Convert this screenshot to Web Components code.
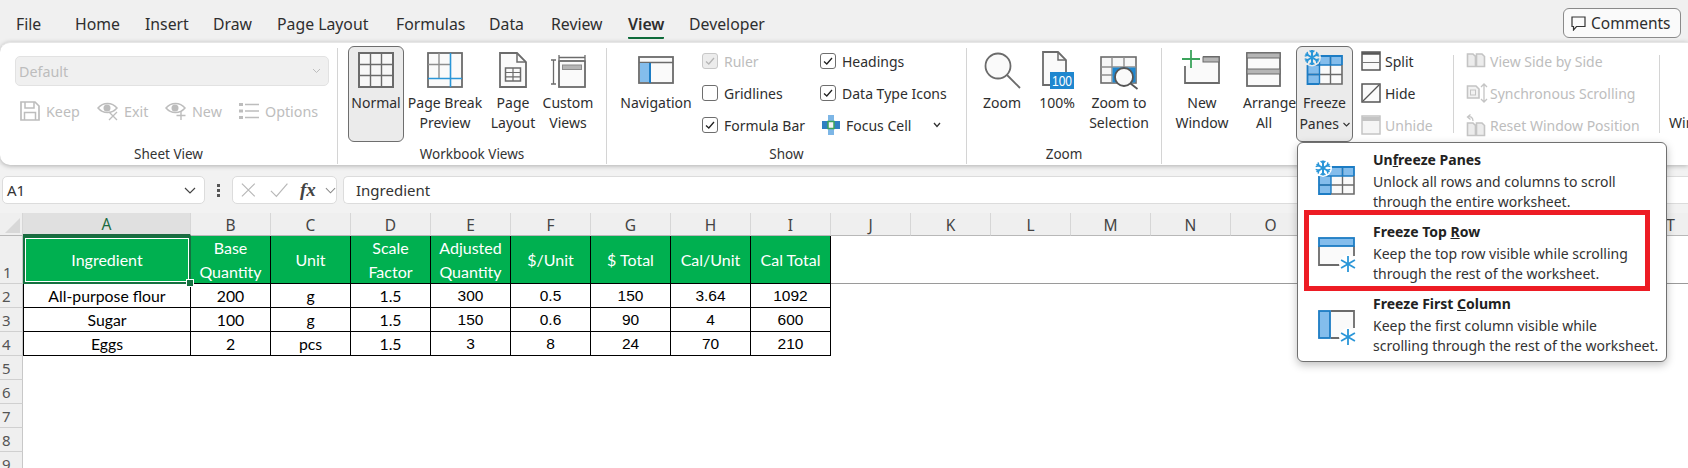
<!DOCTYPE html>
<html>
<head>
<meta charset="utf-8">
<style>
  html, body { margin: 0; height: 468px; overflow: hidden; background: #f0f0f0; font-family: "Noto Sans", "Open Sans", sans-serif; }
</style>
</head>
<body>
<xl-app>
  <xl-tabs slot="tabs"></xl-tabs>
  <xl-ribbon slot="ribbon">
    <xl-group label="Sheet View" width="338">
      <xl-sheetview></xl-sheetview>
    </xl-group>
    <xl-group label="Workbook Views" width="269" pad="10">
      <xl-big icon="normal" w="56" active>Normal</xl-big>
      <xl-big icon="pagebreak" w="82">Page Break<br>Preview</xl-big>
      <xl-big icon="pagelayout" w="54">Page<br>Layout</xl-big>
      <xl-big icon="custom" w="56">Custom<br>Views</xl-big>
    </xl-group>
    <xl-group label="Show" width="360" pad="3">
      <xl-big icon="navigation" w="92">Navigation</xl-big>
      <xl-col w="118">
        <xl-check checked disabled>Ruler</xl-check>
        <xl-check>Gridlines</xl-check>
        <xl-check checked>Formula Bar</xl-check>
      </xl-col>
      <xl-col w="140">
        <xl-check checked>Headings</xl-check>
        <xl-check checked>Data Type Icons</xl-check>
        <xl-small icon="focus" gap="6" chevron>Focus Cell</xl-small>
      </xl-col>
    </xl-group>
    <xl-group label="Zoom" width="195">
      <xl-big icon="zoom" w="70">Zoom</xl-big>
      <xl-big icon="hundred" w="40">100%</xl-big>
      <xl-big icon="zoomsel" w="84">Zoom to<br>Selection</xl-big>
    </xl-group>
    <xl-group width="497" plain>
      <xl-big icon="newwin" w="80">New<br>Window</xl-big>
      <xl-big icon="arrange" w="44">Arrange<br>All</xl-big>
      <xl-big icon="freeze" w="57" active style="margin-left:10px">Freeze<br>Panes <xl-caret></xl-caret></xl-big>
      <xl-col w="92" style="margin-left:8px">
        <xl-small icon="split">Split</xl-small>
        <xl-small icon="hide">Hide</xl-small>
        <xl-small icon="unhide" disabled>Unhide</xl-small>
      </xl-col>
      <xl-col w="206" divided>
        <xl-small icon="sidebyside" disabled>View Side by Side</xl-small>
        <xl-small icon="syncscroll" disabled>Synchronous Scrolling</xl-small>
        <xl-small icon="resetwin" disabled>Reset Window Position</xl-small>
      </xl-col>
    </xl-group>
    <xl-group width="28" plain short>
      <xl-big w="78"><br>Windows</xl-big>
    </xl-group>
  </xl-ribbon>
  <xl-formula slot="formula"></xl-formula>
  <xl-sheet slot="sheet"></xl-sheet>
  <xl-menu slot="menu">
    <xl-item icon="m-unfreeze"><span slot="title">Un<u>f</u>reeze Panes</span>Unlock all rows and columns to scroll<br>through the entire worksheet.</xl-item>
    <xl-item icon="m-top"><span slot="title">Freeze Top <u>R</u>ow</span>Keep the top row visible while scrolling<br>through the rest of the worksheet.</xl-item>
    <xl-item icon="m-col"><span slot="title">Freeze First <u>C</u>olumn</span>Keep the first column visible while<br>scrolling through the rest of the worksheet.</xl-item>
  </xl-menu>
</xl-app>

<script>
const G = '#6b6b6b', B = '#1c7cc4', L = '#84bdec', S = '#2a96d8', D = '#c4c4c4';
const grid = (x, y, w, h, xs, ys, c, sw = 1.4) =>
  xs.map(v => `<path d="M${v} ${y}V${y + h}" stroke="${c}" stroke-width="${sw}"/>`).join('') +
  ys.map(v => `<path d="M${x} ${v}H${x + w}" stroke="${c}" stroke-width="${sw}"/>`).join('');
// six armed star, ticks on the arms make it a snowflake
const flake = (x, y, r, c = S, sw = 2, ticks = true) => {
  let out = '';
  for (const a of [90, 30, 150, 270, 210, 330]) {
    const ca = Math.cos(a * Math.PI / 180), sa = Math.sin(a * Math.PI / 180);
    out += `<path d="M${x} ${y}L${x + r * ca} ${y + r * sa}" stroke="${c}" stroke-width="${sw}"/>`;
    if (ticks) {
      const mx = x + r * .62 * ca, my = y + r * .62 * sa, t = r * .32;
      out += `<path d="M${mx - t * sa + t * ca} ${my + t * ca + t * sa}L${mx} ${my}L${mx + t * sa + t * ca} ${my - t * ca + t * sa}" stroke="${c}" stroke-width="${sw * .7}" fill="none"/>`;
    }
  }
  return out;
};
const doc2 = c => `<path d="M1.500 3H7L9.500 5.500V15.500H1.500ZM10.500 3H16L18.500 5.500V15.500H10.500Z" fill="#ececec" stroke="${c}" stroke-width="1.600"/>`;

// every icon: [width, height, markup]
const ICONS = {
  normal: [36, 36, `<rect x="1" y="1" width="34" height="34" fill="#f7f7f7" stroke="${G}" stroke-width="2"/>` + grid(1, 1, 34, 34, [12.5, 23.5], [12.5, 23.5], G)],
  pagebreak: [36, 36, `<rect x="1" y="1" width="34" height="34" fill="#fafafa" stroke="${G}" stroke-width="1.800"/>` + grid(1, 1, 23, 25, [12], [12.500], '#8e8e8e') + `<path d="M23.500 1V35M1 26.500H35" stroke="${S}" stroke-width="1.600"/>`],
  pagelayout: [28, 36, `<path d="M1 1H18L27 10V35H1Z" fill="#fafafa" stroke="${G}" stroke-width="1.800"/><path d="M18 1V10H27" fill="none" stroke="${G}" stroke-width="1.500"/><rect x="6.500" y="16" width="15" height="13" fill="none" stroke="${G}" stroke-width="1.500"/>` + grid(6.5, 16, 15, 13, [14], [20.500, 24.800], G, 1.200)],
  custom: [36, 36, `<path d="M1 8H6M3.500 8V32M1 32H6M9 3V8M35 3V8M9 5.500H35" stroke="${G}" stroke-width="1.300" fill="none"/><rect x="9" y="9" width="26" height="26" fill="#fafafa" stroke="${G}" stroke-width="1.800"/><rect x="12.500" y="13" width="19" height="4.500" fill="#b5b5b5" stroke="#8c8c8c"/>`],
  navigation: [36, 28, `<rect x="1" y="1" width="34" height="26" fill="#fafafa" stroke="${G}" stroke-width="1.800"/><path d="M1 6.500H35" stroke="${G}" stroke-width="1.500"/><rect x="2" y="7" width="10" height="19" fill="${L}"/><path d="M12 7V27" stroke="${B}" stroke-width="2"/>`],
  zoom: [36, 36, `<circle cx="14" cy="14" r="12.500" fill="#fafafa" stroke="${G}" stroke-width="1.800"/><path d="M23 23L36 36" stroke="${G}" stroke-width="1.800"/>`],
  hundred: [36, 38, `<path d="M4 1H19L27 9V34H4Z" fill="#fafafa" stroke="${G}" stroke-width="1.800"/><path d="M19 1V9H27" fill="none" stroke="${G}" stroke-width="1.500"/><rect x="11" y="21" width="24" height="17" fill="#1f87cf"/><text x="23" y="35" text-anchor="middle" font-family="Liberation Sans, sans-serif" font-size="14.500" textLength="20" lengthAdjust="spacingAndGlyphs" fill="#fff">100</text>`],
  zoomsel: [38, 38, `<rect x="1" y="6" width="35" height="26" fill="#f7f7f7" stroke="${G}" stroke-width="1.600"/>` + grid(1, 6, 35, 26, [12, 24], [16, 24], '#8e8e8e') + `<path d="M12.500 16.500H35.500V31.500H12.500Z" fill="#1f87cf"/><circle cx="24" cy="26" r="9" fill="#fafafa" stroke="#555" stroke-width="1.800"/><path d="M30.500 32.500L37.500 38" stroke="#555" stroke-width="1.800"/>`],
  newwin: [42, 36, `<path d="M4 14V31H38V5H22" fill="#fafafa" stroke="${G}" stroke-width="1.800"/><rect x="22" y="5" width="16" height="5" fill="#b5b5b5" stroke="${G}"/><path d="M1 7H19M10 -2V16" stroke="#3ca45c" stroke-width="1.800"/>`],
  arrange: [36, 36, `<rect x="1" y="1" width="33" height="33" fill="#fafafa" stroke="${G}" stroke-width="1.800"/><rect x="1" y="1" width="33" height="5" fill="#b5b5b5" stroke="${G}"/><rect x="1" y="17" width="33" height="5" fill="#b5b5b5" stroke="${G}"/>`],
  freeze: [40, 36, `<rect x="2.500" y="4" width="34.500" height="28" fill="#fafafa"/><rect x="2.500" y="4" width="34.500" height="9" fill="${L}"/><rect x="2.500" y="4" width="12" height="28" fill="${L}"/>` + grid(2.5, 4, 34.5, 28, [25.5], [22.500], G) + `<path d="M14.500 13V32M2.500 13H37M2.500 22.500H14.500M14.500 4V13M25.500 4V13" stroke="${B}" stroke-width="1.400"/><path d="M2.500 13V32H14.500M2.500 4H37V13" fill="none" stroke="${B}" stroke-width="1.800"/><path d="M14.500 32H37V13" fill="none" stroke="${G}" stroke-width="1.600"/><circle cx="7" cy="5.500" r="9" fill="#ececec"/>` + flake(7, 5.5, 7.5)],
  split: [20, 20, `<rect x="1" y="1" width="18" height="18" fill="#fafafa" stroke="#555" stroke-width="1.500"/><path d="M1 2.500H19" stroke="#555" stroke-width="2.500"/><path d="M1 11.500H19" stroke="#777" stroke-width="1.200"/>`],
  hide: [20, 20, `<rect x="1" y="1" width="18" height="18" fill="#fafafa" stroke="#555" stroke-width="1.500"/><path d="M2 18L18 2" stroke="#555" stroke-width="1.200"/>`],
  unhide: [20, 20, `<rect x="1" y="1" width="18" height="18" fill="#f5f5f5" stroke="${D}" stroke-width="1.500"/><path d="M1 4H19" stroke="${D}" stroke-width="4"/>`],
  sidebyside: [20, 20, doc2(D)],
  syncscroll: [22, 22, `<path d="M1.500 4H10L13 7V16H1.500Z" fill="#f2f2f2" stroke="${D}" stroke-width="1.600"/><rect x="4.500" y="8" width="5" height="5" fill="none" stroke="${D}"/><path d="M18 2V20M15 5L18 2L21 5M15 17L18 20L21 17" fill="none" stroke="${D}" stroke-width="1.300"/>`],
  resetwin: [20, 22, `<g transform="translate(0 6)">${doc2(D)}</g><path d="M7 7C7 3 4 2 2 3M4.500 .5L1.500 3L4.500 5.500" fill="none" stroke="${D}" stroke-width="1.300"/>`],
  focus: [18, 20, `<rect x="6" y="0" width="6" height="20" fill="#4a96d4"/><rect x="0" y="6" width="18" height="8" fill="#2f80c2"/><rect x="6" y="0" width="6" height="6" fill="#7db6e6"/><rect x="6" y="14" width="6" height="6" fill="#7db6e6"/><rect x="6" y="6.500" width="6" height="7" fill="#f4f4f4" stroke="#3ca45c" stroke-width="1.500"/>`],
  keep: [20, 20, `<path d="M1 1H15L19 5V19H1Z" fill="none" stroke="#bdbdbd" stroke-width="1.700"/><path d="M5 1V7H14V1M4.500 19V11.500H15.500V19" fill="none" stroke="#bdbdbd" stroke-width="1.500"/>`],
  exit: [21, 20, `<path d="M1 7C6 1 15 1 20 7C15 13 6 13 1 7Z" fill="none" stroke="#bdbdbd" stroke-width="1.500"/><circle cx="10" cy="7" r="3.500" fill="#bdbdbd"/><path d="M12 11L20 19M20 11L12 19" stroke="#bdbdbd" stroke-width="1.300"/>`],
  neweye: [21, 20, `<path d="M1 7C6 1 15 1 20 7C15 13 6 13 1 7Z" fill="none" stroke="#bdbdbd" stroke-width="1.500"/><circle cx="10" cy="7" r="3.500" fill="#bdbdbd"/><path d="M16 10V19M11.500 14.500H20.500" stroke="#bdbdbd" stroke-width="1.400"/>`],
  options: [20, 18, `<path d="M6 2.500H20M6 9H20M6 15.500H20" stroke="#bdbdbd" stroke-width="1.500"/><path d="M0 1H4V4H0ZM0 7.500H4V10.500H0ZM0 14H4V17H0Z" fill="#bdbdbd"/>`],
  'm-unfreeze': [40, 40, `<rect x="3" y="7" width="35" height="27" fill="#fafafa"/><rect x="3" y="7" width="35" height="9" fill="${L}"/><rect x="3" y="7" width="12" height="27" fill="${L}"/>` + grid(3, 7, 35, 27, [26.5], [25], G) + `<path d="M15 16V34M3 16H38M3 25H15M26.500 7V16" stroke="${B}" stroke-width="1.400"/><path d="M3 16V34H15M3 7H38V16" fill="none" stroke="${B}" stroke-width="1.800"/><path d="M15 34H38V16" fill="none" stroke="${G}" stroke-width="1.600"/><circle cx="7" cy="8" r="9" fill="#fff"/>` + flake(7, 8, 7.5)],
  'm-top': [40, 40, `<rect x="3" y="6" width="35" height="27" fill="#fafafa"/><path d="M38 14V24M26 33H3V14" fill="none" stroke="${G}" stroke-width="1.800"/><rect x="3" y="6" width="35" height="8" fill="${L}" stroke="${B}" stroke-width="1.800"/><circle cx="32" cy="32" r="9" fill="#fff"/>` + flake(32, 32, 8, S, 1.8, false)],
  'm-col': [40, 40, `<rect x="3" y="7" width="35" height="27" fill="#fafafa"/><path d="M15 7H38V24M26 34H15" fill="none" stroke="${G}" stroke-width="1.800"/><rect x="3" y="7" width="11" height="27" fill="${L}" stroke="${B}" stroke-width="1.800"/><circle cx="32" cy="33" r="9" fill="#fff"/>` + flake(32, 33, 8, S, 1.8, false)]
};

function define(name, css, html, setup) {
  customElements.define(name, class extends HTMLElement {
    constructor() {
      super();
      this.attachShadow({ mode: 'open' });
    }
    connectedCallback() {
      this.shadowRoot.innerHTML = `<style>${css}</style>${typeof html === 'function' ? html(this) : html}`;
      if (setup) setup(this, this.shadowRoot);
    }
  });
}

class XlIco extends HTMLElement {
  connectedCallback() {
    const [w, h, body] = ICONS[this.getAttribute('name')];
    this.attachShadow({ mode: 'open' }).innerHTML =
      `<style>:host{display:block;line-height:0}svg{overflow:visible}</style><svg width="${w}" height="${h}" viewBox="0 0 ${w} ${h}" fill="none">${body}</svg>`;
  }
}
customElements.define('xl-ico', XlIco);

define('xl-app', `
  :host { display: block; width: 1688px; height: 468px; position: relative; overflow: hidden; }
  .menu { position: absolute; left: 1297px; top: 142px; }
`, `<slot name="tabs"></slot><slot name="ribbon"></slot><slot name="formula"></slot><slot name="sheet"></slot><div class="menu"><slot name="menu"></slot></div>`);

define('xl-tabs', `
  :host { display: flex; height: 42px; padding-left: 16px; box-sizing: border-box; background: #f0f0f0; font-size: 15.800px; color: #2e2e2e; }
  .t { height: 42px; padding-top: 13px; box-sizing: border-box; line-height: 22px; white-space: nowrap; }
  .t span { display: inline-block; height: 24px; }
  .on span { font-weight: 600; border-bottom: 2.500px solid #0e6b3a; border-radius: 1px; }
  .cm { margin: 8px 7px 0 auto; width: 118px; height: 30px; box-sizing: border-box; border: 1px solid #8a8a8a; border-radius: 6px; background: #fafafa; display: flex; align-items: center; gap: 5px; padding-left: 7px; font-size: 15.500px; }
`, () => {
  const tabs = [['File', 59], ['Home', 70], ['Insert', 68], ['Draw', 64], ['Page Layout', 119], ['Formulas', 93], ['Data', 62], ['Review', 77], ['View', 61], ['Developer', 90]];
  return tabs.map(([t, w]) => `<div class="t${t === 'View' ? ' on' : ''}" style="width:${w}px"><span>${t}</span></div>`).join('') +
    `<div class="cm"><svg width="15" height="15" viewBox="0 0 15 15" fill="none"><path d="M1 1H14V10.500H5.500L2.500 14V10.500H1Z" stroke="#333" stroke-width="1.200"/></svg>Comments</div>`;
});

define('xl-ribbon', `
  :host { display: flex; height: 123px; background: #fff; border-radius: 10px 0 0 10px; box-shadow: 0 1px 5px rgba(0,0,0,.28); position: relative; font-size: 14px; color: #2e2e2e; overflow: hidden; border-top: 1px solid #e6e6e6; box-sizing: border-box; }
`, `<slot></slot>`);

define('xl-group', `
  :host { display: block; flex: none; box-sizing: border-box; height: 116px; margin-top: 5px; border-right: 1px solid #d4d4d4; }
  :host([plain]) { border-right: 0; }
  :host([short]) { height: 78px; margin-top: 12px; border-left: 1px solid #d4d4d4; }
  :host([short]) .c { margin-top: -9px; }
  .c { display: flex; height: 96px; margin-top: -2px; }
  .l { text-align: center; font-size: 13.500px; line-height: 20px; color: #333; margin-top: 2px; }
`, el => `<div class="c" style="padding-left:${el.getAttribute('pad') || 0}px"><slot></slot></div><div class="l">${el.getAttribute('label') || ''}</div>`,
(el) => { el.style.width = el.getAttribute('width') + 'px'; });

define('xl-big', `
  :host { display: block; flex: none; box-sizing: border-box; height: 96px; text-align: center; line-height: 20px; font-size: 14px; white-space: nowrap; border: 1px solid transparent; border-radius: 6px; }
  :host([active]) { background: #ebebeb; border-color: #6e6e6e; }
  .i { height: 36px; margin-top: 5px; margin-bottom: 5px; display: flex; align-items: center; justify-content: center; }
`, el => {
  const icon = el.getAttribute('icon');
  return `<div class="i">${icon ? `<xl-ico name="${icon}"></xl-ico>` : ''}</div><slot></slot>`;
}, (el) => { el.style.width = el.getAttribute('w') + 'px'; });

define('xl-caret', `
  :host { display: inline-block; width: 7px; height: 7px; vertical-align: 1px; }
`, `<svg width="7" height="7" viewBox="0 0 7 7" fill="none"><path d="M.5 2L3.500 5L6.500 2" stroke="#333" stroke-width="1.100"/></svg>`);

define('xl-col', `
  :host { display: flex; flex-direction: column; flex: none; height: 96px; margin-top: -1px; box-sizing: border-box; }
  :host([divided]) { margin-top: 9px; height: 78px; padding-left: 12px; border-left: 1px solid #d4d4d4; }
  :host([divided]) ::slotted(:first-child) { margin-top: -10px; }
`, `<slot></slot>`, (el) => { el.style.width = el.getAttribute('w') + 'px'; });

define('xl-check', `
  :host { display: flex; flex: none; align-items: center; height: 32px; gap: 6px; font-size: 14px; white-space: nowrap; }
  :host([disabled]) { color: #bdbdbd; }
  .b { width: 16px; height: 16px; box-sizing: border-box; border: 1px solid #6e6e6e; border-radius: 3px; background: #fff; line-height: 0; }
  :host([disabled]) .b { border-color: #c8c8c8; background: #ececec; }
`, el => {
  const c = el.hasAttribute('disabled') ? '#b5b5b5' : '#222';
  const tick = el.hasAttribute('checked') ? `<svg width="14" height="14" viewBox="0 0 14 14" fill="none"><path d="M3 7.500L5.800 10L11 4" stroke="${c}" stroke-width="1.300"/></svg>` : '';
  return `<div class="b">${tick}</div><slot></slot>`;
});

define('xl-small', `
  :host { display: flex; flex: none; align-items: center; height: 32px; font-size: 14px; white-space: nowrap; }
  :host([disabled]) { color: #bdbdbd; }
  .i { width: 24px; flex: none; }
  svg.ch { margin-left: 22px; }
`, el => {
  const gap = el.getAttribute('gap');
  return `<div class="i" ${gap ? `style="margin-left:2px;width:${18 + +gap}px"` : ''}><xl-ico name="${el.getAttribute('icon')}"></xl-ico></div><slot></slot>` +
    (el.hasAttribute('chevron') ? `<svg class="ch" width="8" height="6" viewBox="0 0 8 6" fill="none"><path d="M1 1L4 4.500L7 1" stroke="#333" stroke-width="1.300"/></svg>` : '');
});

define('xl-sheetview', `
  :host { display: block; color: #bdbdbd; font-size: 14.300px; }
  .combo { margin: 10px 0 0 15px; width: 314px; height: 30px; box-sizing: border-box; background: #f0f0f0; border: 1px solid #e2e2e2; border-radius: 5px; display: flex; align-items: center; justify-content: space-between; padding: 0 7px 0 3px; }
  .row { display: flex; align-items: center; margin: 15px 0 0 20px; }
  .o { display: flex; align-items: center; gap: 6px; }
`, `<div class="combo">Default<svg width="9" height="6" viewBox="0 0 9 6" fill="none"><path d="M1 1L4.500 4.500L8 1" stroke="#bdbdbd"/></svg></div>
<div class="row">
  <div class="o" style="width:77px"><xl-ico name="keep"></xl-ico>Keep</div>
  <div class="o" style="width:68px"><xl-ico name="exit"></xl-ico>Exit</div>
  <div class="o" style="width:74px"><xl-ico name="neweye"></xl-ico>New</div>
  <div class="o"><xl-ico name="options"></xl-ico>Options</div>
</div>`);

define('xl-formula', `
  :host { display: flex; height: 48px; box-sizing: border-box; padding: 11px 0 9px 2px; background: #f2f2f2; font-size: 15px; color: #333; }
  .box { height: 28px; box-sizing: border-box; background: #fff; border: 1px solid #dcdcdc; border-radius: 5px; display: flex; align-items: center; }
  .name { width: 203px; padding: 0 8px 0 4px; justify-content: space-between; }
  .dots { width: 27px; display: flex; flex-direction: column; align-items: center; justify-content: center; gap: 2px; }
  .dots i { width: 3px; height: 3px; background: #555; }
  .fx { width: 105px; padding-left: 8px; gap: 14px; }
  .fx b { font: italic 700 19px "Liberation Serif", serif; color: #444; width: 24px; margin-left: -2px; }
  .bar { margin-left: 6px; flex: 1; padding-left: 12px; border-right: 0; border-radius: 5px 0 0 5px; }
`, `<div class="box name">A1<svg width="12" height="7" viewBox="0 0 12 7" fill="none"><path d="M1 1L6 6L11 1" stroke="#444" stroke-width="1.200"/></svg></div>
<div class="dots"><i></i><i></i><i></i></div>
<div class="box fx">
  <svg width="16" height="16" viewBox="0 0 16 16" fill="none"><path d="M1 1L15 15M15 1L1 15" stroke="#b8b8b8" stroke-width="1.300"/></svg>
  <svg width="20" height="16" viewBox="0 0 20 16" fill="none"><path d="M1 9L7 15L19 1" stroke="#b8b8b8" stroke-width="1.300"/></svg>
  <b>fx</b>
  <svg width="12" height="7" viewBox="0 0 12 7" fill="none" style="margin-left:-11px"><path d="M1 1L6 6L11 1" stroke="#888" stroke-width="1.100"/></svg>
</div>
<div class="box bar">Ingredient</div>`);

define('xl-sheet', `
  :host { display: block; height: 255px; overflow: hidden; background: #fff; }
  .g { display: grid; grid-template-columns: 23px 168px repeat(19, 80px); grid-template-rows: 23px 48px repeat(8, 24px); width: max-content; }
  .g > div { box-sizing: border-box; display: flex; align-items: center; justify-content: center; text-align: center; white-space: nowrap; }
  .ch { background: #efefef; border-right: 1px solid #d6d6d6; border-bottom: 1px solid #b8b8b8; font: 15.500px "Noto Sans", sans-serif; color: #444; padding-top: 1px; }
  .ch.sel { background: #e0e0e0; color: #1c6b41; border-bottom: 2px solid #1c6b41; }
  .corner { background: #efefef; border-right: 1px solid #d6d6d6; border-bottom: 1px solid #b8b8b8; }
  .corner svg { display: block; }
  .rh { background: #efefef; border-right: 1px solid #c8c8c8; border-bottom: 1px solid #d0d0d0; font: 15px "Noto Sans", sans-serif; color: #555; justify-content: flex-start !important; padding-left: 2px; }
  .rh.one { align-items: flex-end !important; padding-left: 3px; padding-bottom: 1px; }
  .hd { background: #00b050; color: #fff; font: 16px/24px Lato, sans-serif; border-right: 1px solid #000; border-bottom: 1px solid #000; }
  .hd.a { position: relative; border: 2px solid #14713f; box-shadow: inset 0 0 0 1px #fff; }
  .hd.a::after { content: ""; position: absolute; right: -5px; bottom: -5px; width: 6px; height: 6px; background: #14713f; border: 1px solid #fff; z-index: 2; }
  .c { color: #000; border-right: 1px solid #000; border-bottom: 1px solid #000; font: 15.800px Lato, sans-serif; }
  .n { font: 15.500px "Liberation Sans", sans-serif; }
  .first { border-left: 1px solid #000; }
  .top { border-bottom: 1px solid #9a9a9a; }
`, `<div class="g"></div>`, (el, root) => {
  const cols = 'ABCDEFGHIJKLMNOPQRST'.split('');
  const covered = 'PQRS'; // these letters lie under the open menu
  const head = ['Ingredient', 'Base<br>Quantity', 'Unit', 'Scale<br>Factor', 'Adjusted<br>Quantity', '$/Unit', '$ Total', 'Cal/Unit', 'Cal Total'];
  const data = [
    ['All-purpose flour', '200', 'g', '1.5', '300', '0.5', '150', '3.64', '1092'],
    ['Sugar', '100', 'g', '1.5', '150', '0.6', '90', '4', '600'],
    ['Eggs', '2', 'pcs', '1.5', '3', '8', '24', '70', '210']
  ];
  let h = `<div class="corner"><svg width="22" height="22" viewBox="0 0 22 22"><path d="M20 5V20H5Z" fill="#d8d8d8"/></svg></div>`;
  h += cols.map((c, i) => `<div class="ch${i === 0 ? ' sel' : ''}">${covered.includes(c) ? '' : c}</div>`).join('');
  h += `<div class="rh one">1</div>`;
  h += cols.map((c, i) => i < 9 ? `<div class="hd${i === 0 ? ' a' : ''}">${head[i]}</div>` : `<div class="top"></div>`).join('');
  for (let r = 0; r < 8; r++) {
    h += `<div class="rh">${r + 2}</div>`;
    h += cols.map((c, i) => {
      if (r > 2 || i > 8) return `<div></div>`;
      return `<div class="c${i > 3 ? ' n' : ''}${i === 0 ? ' first' : ''}">${data[r][i]}</div>`;
    }).join('');
  }
  root.querySelector('.g').innerHTML = h;
});

define('xl-menu', `
  :host { display: block; width: 370px; height: 220px; box-sizing: border-box; padding: 1px 0; background: #fff; border: 1px solid #707070; border-radius: 6px; box-shadow: 0 3px 8px rgba(0,0,0,.25); position: relative; }
  .hl { position: absolute; left: 6px; top: 67px; width: 346px; height: 81px; box-sizing: border-box; border: 5px solid #ed1c24; }
`, `<slot></slot><div class="hl"></div>`);

define('xl-item', `
  :host { display: flex; height: 72px; box-sizing: border-box; padding-left: 18px; font-size: 14px; line-height: 20px; color: #333; white-space: nowrap; }
  .i { width: 57px; flex: none; padding-top: 16px; }
  .t { padding-top: 6px; }
  .h { font-weight: 700; color: #222; margin-bottom: 2px; }
`, el => `<div class="i"><xl-ico name="${el.getAttribute('icon')}"></xl-ico></div><div class="t"><div class="h"><slot name="title"></slot></div><slot></slot></div>`);
</script>
</body>
</html>
